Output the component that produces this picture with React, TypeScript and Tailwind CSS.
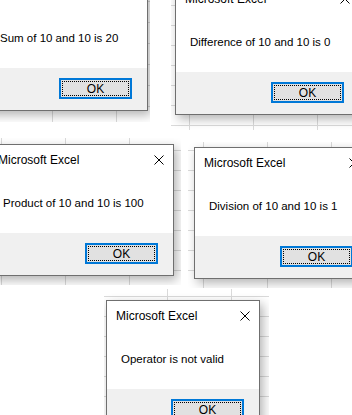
import type { ReactNode } from "react";

// each panel is one screenshot: an excel sheet with a message box on top

type DialogProps = {
  left: number;
  top: number;
  width: number;
  message: string;
};

function OkButton() {
  return (
    <div className="relative flex h-[21px] w-[73px] items-center justify-center border-2 border-[#0078d7] bg-[#e1e1e1] text-[12px] text-black">
      <span className="absolute inset-[1px] border border-dotted border-black" />
      <span className="relative leading-none">OK</span>
    </div>
  );
}

function CloseIcon() {
  return (
    <svg width="10" height="10" viewBox="0 0 10 10" className="block">
      <path d="M0.5 0.5 L9.5 9.5 M9.5 0.5 L0.5 9.5" stroke="#000" strokeWidth="1" fill="none" />
    </svg>
  );
}

function MessageBox({ left, top, width, message }: DialogProps) {
  return (
    <div
      className="absolute flex h-[132px] flex-col border border-[#6f6f6f] bg-white shadow-[3px_4px_10px_rgba(0,0,0,0.3)]"
      style={{ left, top, width }}
    >
      <div className="flex h-[30px] shrink-0 items-center justify-between pl-[9px] pr-[9px]">
        <span className="text-[12px] text-black">Microsoft Excel</span>
        <CloseIcon />
      </div>
      <div className="flex h-[58px] shrink-0 items-center pl-[14px]">
        <span className="text-[11.5px] whitespace-nowrap text-black">{message}</span>
      </div>
      <div className="flex flex-1 items-start justify-end bg-[#f0f0f0] pt-[10px] pr-[15px]">
        <OkButton />
      </div>
    </div>
  );
}

function Sheet({ className, children }: { className: string; children: ReactNode }) {
  return (
    <div
      className={`absolute overflow-hidden bg-white [background-image:linear-gradient(to_right,#dadada_1px,transparent_1px),linear-gradient(to_bottom,#dadada_1px,transparent_1px)] [background-size:64px_20px] ${className}`}
    >
      {children}
    </div>
  );
}

export default function App() {
  return (
    <div className="relative h-[415px] w-[352px] overflow-hidden bg-white font-['Liberation_Sans',Arial,sans-serif]">
      <Sheet className="left-0 top-0 h-[122px] w-[150px] [background-position:52px_1px] [background-size:64px_21px]">
        <MessageBox left={-15} top={-21} width={163} message="Sum of 10 and 10 is 20" />
      </Sheet>

      <Sheet className="left-[171px] top-0 h-[130px] w-[181px] [background-position:18px_5px]">
        <MessageBox left={4} top={-17} width={185} message="Difference of 10 and 10 is 0" />
      </Sheet>

      <Sheet className="left-0 top-[138px] h-[147px] w-[181px] [background-position:1px_12px]">
        <MessageBox left={-12} top={6} width={186} message="Product of 10 and 10 is 100" />
      </Sheet>

      <Sheet className="left-[188px] top-[142px] h-[146px] w-[164px] [background-position:15px_8px]">
        <MessageBox left={6} top={5} width={175} message="Division of 10 and 10 is 1" />
      </Sheet>

      <Sheet className="left-[104px] top-[289px] h-[126px] w-[165px] [background-position:63px_7px]">
        <MessageBox left={2} top={11} width={154} message="Operator is not valid" />
      </Sheet>
    </div>
  );
}
